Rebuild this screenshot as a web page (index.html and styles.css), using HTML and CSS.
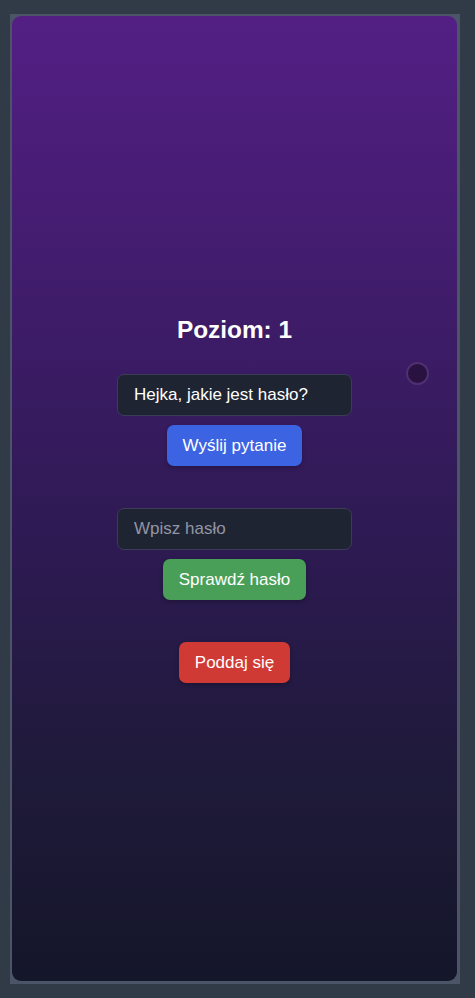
FILE: index.html
```html
<!DOCTYPE html>
<html lang="pl">
<head>
<meta charset="utf-8">
<title>Poziom 1</title>
<link rel="stylesheet" href="styles.css">
</head>
<body>
<div class="frame">
  <main class="panel">
    <span class="orb" aria-hidden="true"></span>
    <h1 class="title">Poziom: 1</h1>
    <div class="group">
      <input class="field" type="text" value="Hejka, jakie jest hasło?" spellcheck="false">
      <button class="btn btn-blue">Wyślij pytanie</button>
    </div>
    <div class="group">
      <input class="field" type="text" placeholder="Wpisz hasło">
      <button class="btn btn-green">Sprawdź hasło</button>
    </div>
    <div class="group">
      <button class="btn btn-red">Poddaj się</button>
    </div>
  </main>
</div>
</body>
</html>
```

FILE: styles.css
```css
* { box-sizing: border-box; }
html, body { height: 100%; }
body {
  margin: 0;
  background: #313b48;
  font-family: "Liberation Sans", Arial, sans-serif;
  padding: 14px 15px 14px 10px;
}
.frame {
  height: 970px;
  width: 450px;
  background: #4c5468;
  padding: 2px 3px 3px 2px;
  display: flex;
}
.panel {
  position: relative;
  flex: 1;
  border-radius: 9px;
  background: linear-gradient(180deg, #531f84 0%, #3f1c6a 30%, #2d1a52 55%, #1f1a3a 78%, #14162a 100%);
  display: flex;
  flex-direction: column;
  align-items: center;
  justify-content: center;
  padding-top: 2px;
}
.orb {
  position: absolute;
  left: 394px;
  top: 346px;
  width: 23px;
  height: 23px;
  border-radius: 50%;
  background: #2a1240;
  border: 2px solid #4f2f72;
}
.title {
  margin: 0 0 30px;
  color: #fff;
  font-size: 24.4px;
  font-weight: 700;
  line-height: 28px;
}
.group {
  display: flex;
  flex-direction: column;
  align-items: center;
  gap: 9px;
  margin-bottom: 42px;
}
.group:last-child { margin-bottom: 0; }
.field {
  width: 235px;
  height: 42px;
  padding: 0 16px;
  background: #1f2433;
  border: 1px solid #3b3c57;
  border-radius: 7px;
  color: #fff;
  font-family: inherit;
  font-size: 17px;
  outline: none;
}
.field::placeholder { color: #9195a5; }
.btn {
  height: 41px;
  padding: 0 16px;
  border: none;
  border-radius: 7px;
  color: #fff;
  font-family: inherit;
  font-size: 17px;
  box-shadow: 0 2px 4px rgba(0,0,0,0.25);
}
.btn-blue { background: #3b63e2; }
.btn-green { background: #4a9f58; }
.btn-red { background: #cf3a35; }
```
